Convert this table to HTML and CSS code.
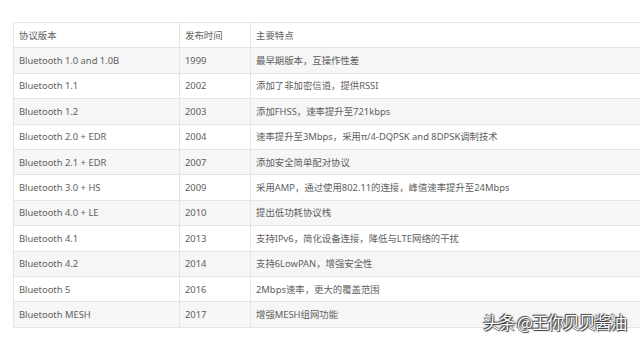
FILE: index.html
```html
<!DOCTYPE html>
<html lang="zh">
<head>
<meta charset="utf-8">
<link rel="stylesheet" href="styles.css">
</head>
<body>
<div class="page">
<table class="spec">
  <colgroup><col class="c1"><col class="c2"><col class="c3"></colgroup>
  <tr><td>协议版本</td><td>发布时间</td><td>主要特点</td></tr>
  <tr><td>Bluetooth 1.0 and 1.0B</td><td>1999</td><td>最早期版本，互操作性差</td></tr>
  <tr><td>Bluetooth 1.1</td><td>2002</td><td>添加了非加密信道，提供RSSI</td></tr>
  <tr><td>Bluetooth 1.2</td><td>2003</td><td>添加FHSS，速率提升至721kbps</td></tr>
  <tr><td>Bluetooth 2.0 + EDR</td><td>2004</td><td>速率提升至3Mbps，采用π/4-DQPSK and 8DPSK调制技术</td></tr>
  <tr><td>Bluetooth 2.1 + EDR</td><td>2007</td><td>添加安全简单配对协议</td></tr>
  <tr><td>Bluetooth 3.0 + HS</td><td>2009</td><td>采用AMP，通过使用802.11的连接，峰值速率提升至24Mbps</td></tr>
  <tr><td>Bluetooth 4.0 + LE</td><td>2010</td><td>提出低功耗协议栈</td></tr>
  <tr><td>Bluetooth 4.1</td><td>2013</td><td>支持IPv6，简化设备连接，降低与LTE网络的干扰</td></tr>
  <tr><td>Bluetooth 4.2</td><td>2014</td><td>支持6LowPAN，增强安全性</td></tr>
  <tr><td>Bluetooth 5</td><td>2016</td><td>2Mbps速率，更大的覆盖范围</td></tr>
  <tr><td>Bluetooth MESH</td><td>2017</td><td>增强MESH组网功能</td></tr>
</table>
<div class="mark">头条 @王你贝贝酱油</div>
</div>
</body>
</html>
```
FILE: styles.css
```css
html, body { margin: 0; padding: 0; overflow: hidden; background: #fff; }
.page { position: relative; width: 640px; height: 342px; overflow: hidden; padding: 22px 0 0 13px; box-sizing: border-box; }
.spec {
  border-collapse: collapse;
  table-layout: fixed;
  width: 660px;
  font-family: "Noto Sans", "Noto Sans CJK SC", sans-serif;
  font-size: 9.4px;
  color: #606060;
}
.c1 { width: 166px; }
.c2 { width: 71px; }
.spec td {
  border: 1px solid #e4e4e4;
  height: 24.4px;
  padding: 0 0 0 5px;
  vertical-align: middle;
  white-space: nowrap;
  line-height: 13px;
}
.spec tr:nth-child(even) td { background: #f6f6f6; }
.mark {
  position: absolute;
  left: 483px;
  top: 309px;
  font-family: "Noto Sans CJK SC", sans-serif;
  font-size: 17px;
  color: #fff;
  letter-spacing: -1.3px;
  text-shadow: 0 0 1px #222, 1px 1px 1px #333, -1px -1px 1px #444;
}
```
